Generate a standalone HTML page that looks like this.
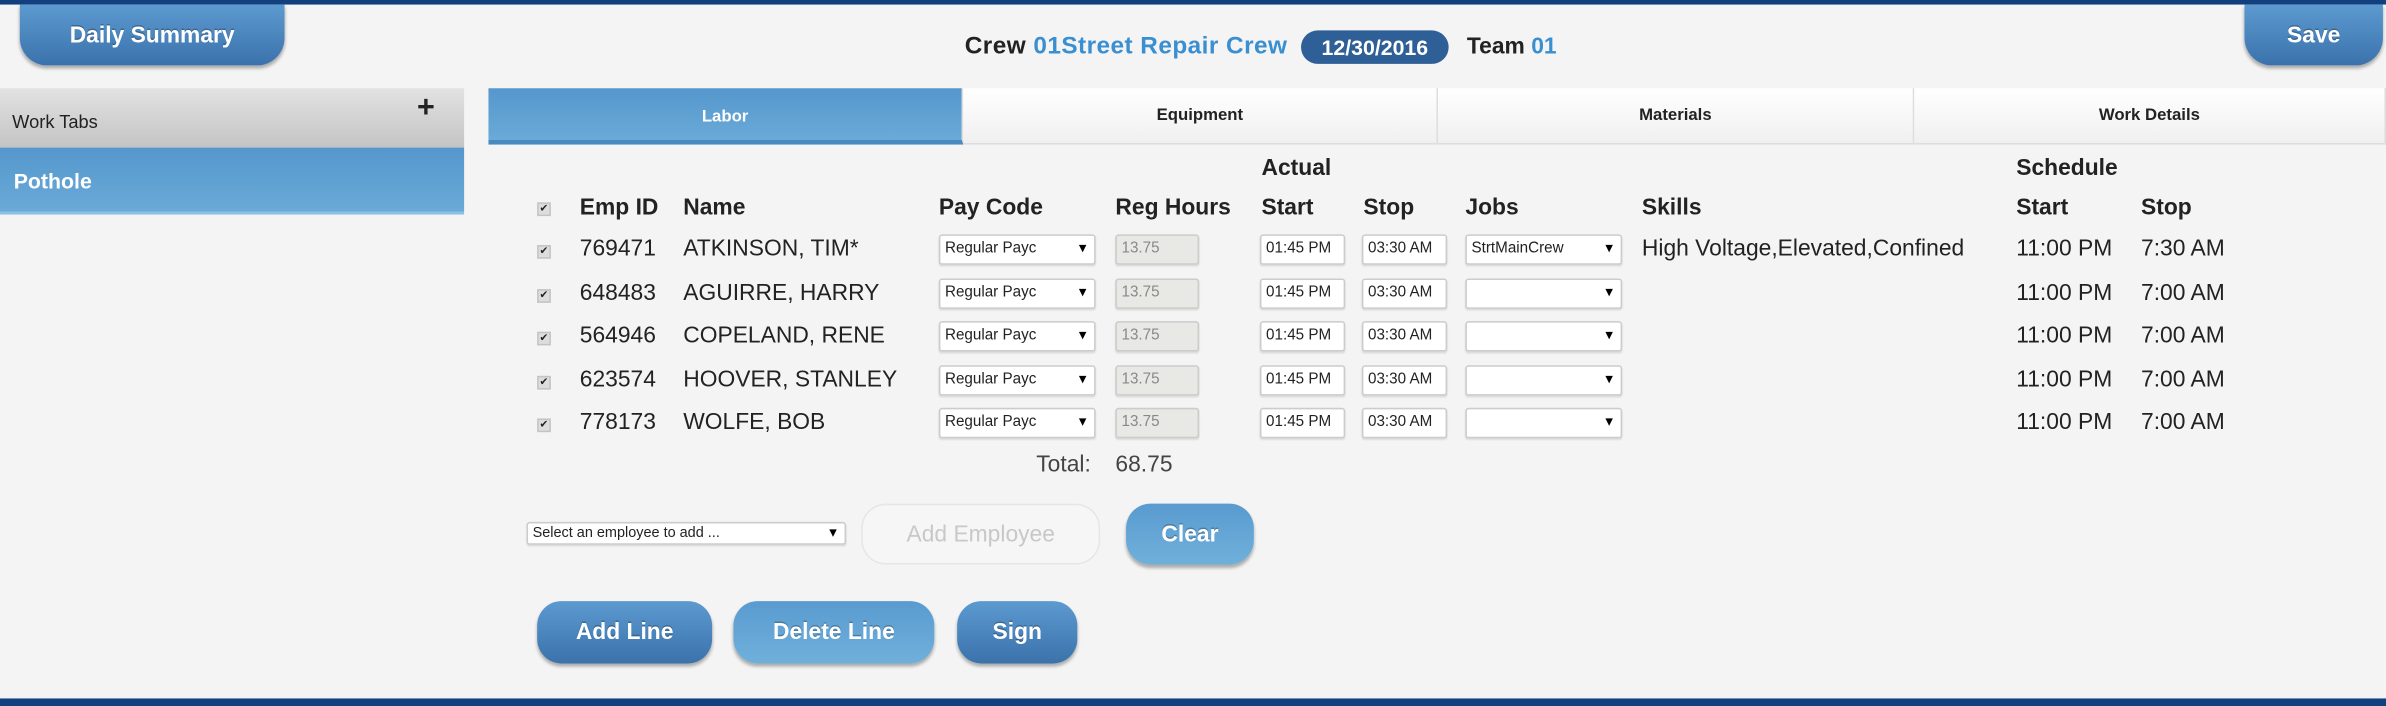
<!DOCTYPE html>
<html><head><meta charset="utf-8"><style>
*{box-sizing:border-box;margin:0;padding:0}
html,body{width:2386px;height:706px;overflow:hidden;background:#f4f4f4}
#s{position:absolute;left:0;top:0;width:1568px;height:464px;transform:scale(1.52168);transform-origin:0 0;font-family:"Liberation Sans",Arial,sans-serif;color:#222;background:#f4f4f4}
.a{position:absolute;white-space:nowrap}
.btn{position:absolute;border-radius:16px;color:#fff;font-weight:bold;font-size:15px;display:flex;align-items:center;justify-content:center;background:linear-gradient(#5c9ad0,#3b72ab);box-shadow:0 2px 2px rgba(0,0,0,.3);text-shadow:0 -1px 0 rgba(0,0,0,.25)}
.lt{background:linear-gradient(#5a9bd0,#6fb0db)}
.tab{position:absolute;top:58px;height:37px;font-size:11px;font-weight:bold;display:flex;align-items:center;justify-content:center;background:linear-gradient(#fff,#f0f0f0);border-right:1px solid #ddd;border-bottom:1px solid #ddd}
.h{font-weight:bold;font-size:15px}
.t{font-size:15px}
.sel,.inp{position:absolute;height:20px;background:#fff;border:1px solid #ccc;border-radius:2px;font-size:10px;line-height:18px;padding-left:3px;overflow:hidden;box-shadow:0 1px 1px rgba(0,0,0,.1)}
.sel:after{content:"▾";position:absolute;right:5px;top:0;font-size:10px;color:#000}
.g{background:#e8e8e4;color:#888}
.cb{position:absolute;width:9px;height:9px;background:#ddd;border:1px solid #c4c4c4;font-size:7px;line-height:7px;text-align:center}
</style></head><body><div id="s">
<div class="a" style="left:0;top:0;width:1568px;height:3px;background:#123f7d"></div>
<div class="a" style="left:0;top:459px;width:1568px;height:5px;background:#123f7d"></div>
<div class="btn" style="left:13px;top:3px;width:174px;height:40px;border-radius:0 0 18px 18px">Daily Summary</div>
<div class="btn" style="left:1475px;top:3px;width:91px;height:40px;border-radius:0 0 18px 18px">Save</div>
<div class="a h" style="left:634px;top:22px;font-size:16px;letter-spacing:0.3px">Crew <span style="color:#3a8fd0">01Street Repair Crew</span></div>
<div class="a" style="left:855px;top:20px;width:97px;height:22px;border-radius:11px;background:#2e5f96;color:#fff;font-weight:bold;font-size:14px;text-align:center;line-height:22px">12/30/2016</div>
<div class="a h" style="left:964px;top:22px;font-size:15px">Team <span style="color:#3a8fd0">01</span></div>
<div class="a" style="left:0;top:58px;width:305px;height:39px;background:linear-gradient(#e2e2e2,#c4c4c4);font-size:12px;padding:15px 0 0 8px">Work Tabs</div>
<div class="a" style="left:274px;top:60px;font-size:20px;font-weight:bold">+</div>
<div class="a" style="left:0;top:97px;width:305px;height:44px;background:linear-gradient(#5597cd,#6aaad8);border-bottom:2px solid #8cc0e4;color:#fff;font-weight:bold;font-size:14px;padding:14px 0 0 9px">Pothole</div>
<div class="tab" style="left:321px;width:312px;background:linear-gradient(#5597cd,#6aaad8);color:#fff;border-bottom:3px solid #4a88c0;padding-top:3px">Labor</div>
<div class="tab" style="left:633px;width:312px">Equipment</div>
<div class="tab" style="left:945px;width:313px">Materials</div>
<div class="tab" style="left:1258px;width:310px">Work Details</div>
<div class="a h" style="left:829px;top:102px">Actual</div>
<div class="a h" style="left:1325px;top:102px">Schedule</div>
<div class="cb" style="left:353px;top:133px">✔</div>
<div class="a h" style="left:381px;top:128px">Emp ID</div>
<div class="a h" style="left:449px;top:128px">Name</div>
<div class="a h" style="left:617px;top:128px">Pay Code</div>
<div class="a h" style="left:733px;top:128px">Reg Hours</div>
<div class="a h" style="left:829px;top:128px">Start</div>
<div class="a h" style="left:896px;top:128px">Stop</div>
<div class="a h" style="left:963px;top:128px">Jobs</div>
<div class="a h" style="left:1079px;top:128px">Skills</div>
<div class="a h" style="left:1325px;top:128px">Start</div>
<div class="a h" style="left:1407px;top:128px">Stop</div>
<div id="rows"></div>
<div class="a t" style="left:681px;top:297px;color:#444">Total:</div>
<div class="a t" style="left:733px;top:297px;color:#444">68.75</div>
<div class="sel" style="left:346px;top:343px;width:210px;height:15px;line-height:13px;font-size:9.5px">Select an employee to add ...</div>
<div class="btn" style="left:566px;top:331px;width:157px;height:40px;background:#f6f6f6;color:#c8c8c8;border:1px solid #e6e6e6;box-shadow:none;text-shadow:none;font-weight:normal">Add Employee</div>
<div class="btn lt" style="left:740px;top:331px;width:84px;height:40px">Clear</div>
<div class="btn" style="left:353px;top:395px;width:115px;height:41px">Add Line</div>
<div class="btn lt" style="left:482px;top:395px;width:132px;height:41px">Delete Line</div>
<div class="btn" style="left:629px;top:395px;width:79px;height:41px">Sign</div>
<script>
var d=[["769471","ATKINSON, TIM*","StrtMainCrew","High Voltage,Elevated,Confined","7:30 AM"],["648483","AGUIRRE, HARRY","","","7:00 AM"],["564946","COPELAND, RENE","","","7:00 AM"],["623574","HOOVER, STANLEY","","","7:00 AM"],["778173","WOLFE, BOB","","","7:00 AM"]];
var h="";d.forEach(function(r,i){var y=155+i*28.6;
h+='<div class="cb" style="left:353px;top:'+(y+6)+'px">✔</div>'+
'<div class="a t" style="left:381px;top:'+y+'px">'+r[0]+'</div>'+
'<div class="a t" style="left:449px;top:'+y+'px">'+r[1]+'</div>'+
'<div class="sel" style="left:617px;top:'+(y-1)+'px;width:103px">Regular Payc</div>'+
'<div class="inp g" style="left:733px;top:'+(y-1)+'px;width:55px">13.75</div>'+
'<div class="inp" style="left:828px;top:'+(y-1)+'px;width:56px">01:45 PM</div>'+
'<div class="inp" style="left:895px;top:'+(y-1)+'px;width:56px">03:30 AM</div>'+
'<div class="sel" style="left:963px;top:'+(y-1)+'px;width:103px">'+r[2]+'</div>'+
'<div class="a t" style="left:1079px;top:'+y+'px">'+r[3]+'</div>'+
'<div class="a t" style="left:1325px;top:'+y+'px">11:00 PM</div>'+
'<div class="a t" style="left:1407px;top:'+y+'px">'+r[4]+'</div>';});
document.getElementById("rows").outerHTML=h;
</script>
</div></body></html>
